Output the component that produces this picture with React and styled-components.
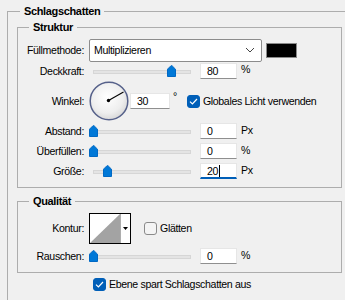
import React from "react";
import styled, { createGlobalStyle } from "styled-components";

const GlobalStyle = createGlobalStyle`
  html, body {
    margin: 0;
    padding: 0;
    background: #f0f0f0;
    overflow: hidden;
  }
  body {
    font-family: "Liberation Sans", Arial, sans-serif;
    font-size: 10.6px;
    letter-spacing: -0.35px;
    color: #000;
  }
  * {
    box-sizing: border-box;
  }
`;

const Outer = styled.fieldset`
  margin: 4px 0 0 7px;
  padding: 1px 0 0 9px;
  border: none;
  border-top: 1px solid #adadad;
  border-left: 1px solid #adadad;
  min-width: 0;
  width: 338px;
  height: 300px;
`;

const Legend = styled.legend`
  margin-left: 3px;
  padding: 0 4px;
  font-weight: bold;
  font-size: 11px;
  line-height: 15px;
`;

const Group = styled.fieldset`
  margin: ${(p) => p.$mt || 0}px 0 0 0;
  padding: ${(p) => p.$pt}px 0 6px 8px;
  border: 1px solid #adadad;
  width: 325px;
  min-width: 0;
  display: flex;
  flex-direction: column;
  gap: ${(p) => p.$gap || 0}px;
`;

const Row = styled.div`
  display: flex;
  align-items: center;
  height: ${(p) => p.$h}px;
`;

const Label = styled.div`
  width: 58px;
  margin-right: 5px;
  text-align: right;
  white-space: nowrap;
`;

const Select = styled.div`
  width: 173px;
  height: 23px;
  background: #fff;
  border: 1px solid #8c8c8c;
  border-radius: 2px;
  display: flex;
  align-items: center;
  justify-content: space-between;
  padding: 0 6px 0 4px;
`;

const Swatch = styled.div`
  width: 31px;
  height: 15px;
  margin-left: 4px;
  background: #000;
  border: 1px solid #8a8a8a;
`;

const SliderBox = styled.div`
  position: relative;
  width: 106px;
  height: 12px;
  margin-right: 5px;
`;

const Track = styled.div`
  margin: 5px 4px 0;
  height: 4px;
  background: #e4e4e4;
  border: 1px solid #d6d6d6;
`;

const Thumb = styled.svg`
  position: absolute;
  top: 0;
  left: ${(p) => p.$pos}px;
`;

const NumBox = styled.div`
  width: ${(p) => p.$w || 37}px;
  height: 16px;
  margin-left: ${(p) => p.$ml || 0}px;
  background: #fff;
  border: 1px solid #e6e6e6;
  border-bottom: ${(p) => (p.$focus ? "2px solid #005fb8" : "1px solid #8f8f8f")};
  padding-left: 6px;
  display: flex;
  align-items: center;
  line-height: 14px;
`;

const Caret = styled.span`
  display: inline-block;
  width: 1px;
  height: 12px;
  background: #000;
  margin-left: 1px;
`;

const Unit = styled.span`
  margin-left: 4px;
  margin-bottom: ${(p) => p.$lift || 3}px;
`;

const Degree = styled.span`
  margin-left: 3px;
  align-self: flex-start;
  margin-top: 9px;
`;

const Box = styled.span`
  width: 13px;
  height: 13px;
  border-radius: 3px;
  flex: none;
  display: inline-flex;
  align-items: center;
  justify-content: center;
  background: ${(p) => (p.$checked ? "#005fb8" : "#f4f4f4")};
  border: 1px solid ${(p) => (p.$checked ? "#005fb8" : "#8a8a8a")};
  margin: 0 3px 0 ${(p) => p.$ml || 0}px;
`;

const Footer = styled.div`
  display: flex;
  align-items: center;
  height: 16px;
  margin-top: 3px;
  padding-left: 76px;
`;

const Check = ({ checked, ml }) => (
  <Box $checked={checked} $ml={ml}>
    {checked && (
      <svg width="9" height="7" viewBox="0 0 9 7">
        <path d="M1 3.6 L3.4 6 L8 1" fill="none" stroke="#fff" strokeWidth="1.2" />
      </svg>
    )}
  </Box>
);

const Slider = ({ pos }) => (
  <SliderBox>
    <Track />
    <Thumb $pos={pos} width="9" height="12" viewBox="0 0 9 12">
      <path d="M0.5 4.2 L3.8 0.9 Q4.5 0.3 5.2 0.9 L8.5 4.2 V11.5 H0.5 Z" fill="#0078d7" stroke="#0068c4" />
    </Thumb>
  </SliderBox>
);

const Dial = () => (
  <svg width="40" height="40" viewBox="0 0 40 40">
    <defs>
      <radialGradient id="dialFill" cx="45%" cy="40%" r="60%">
        <stop offset="0%" stopColor="#ffffff" />
        <stop offset="70%" stopColor="#eeeeee" />
        <stop offset="100%" stopColor="#d9d9d9" />
      </radialGradient>
    </defs>
    <circle cx="20" cy="20" r="18.8" fill="url(#dialFill)" stroke="#56618a" strokeWidth="1.5" />
    <line x1="19.5" y1="19.5" x2="34.5" y2="11" stroke="#000" strokeWidth="1.1" />
    <circle cx="19.5" cy="19.5" r="1.7" fill="#000" />
  </svg>
);

const Contour = () => (
  <svg width="42" height="31" viewBox="0 0 42 31">
    <rect x="0.5" y="0.5" width="41" height="30" fill="#fff" stroke="#000" />
    <path d="M1 30 L31 1 V30 Z" fill="#a3a3a3" />
    <line x1="31.5" y1="1" x2="31.5" y2="30" stroke="#adadad" />
    <path d="M34 14 L39 14 L36.5 17 Z" fill="#000" />
  </svg>
);

const SliderRow = ({ label, pos, value, unit, focus }) => (
  <Row $h={20}>
    <Label>{label}</Label>
    <Slider pos={pos} />
    <NumBox $focus={focus}>
      {value}
      {focus && <Caret />}
    </NumBox>
    <Unit>{unit}</Unit>
  </Row>
);

const App = () => (
  <>
    <GlobalStyle />
    <Outer>
      <Legend>Schlagschatten</Legend>
      <Group $pt={4}>
        <Legend>Struktur</Legend>
        <Row $h={22}>
          <Label>Füllmethode:</Label>
          <Select>
            <span>Multiplizieren</span>
            <svg width="10" height="6" viewBox="0 0 10 6">
              <path d="M1 1 L5 5 L9 1" fill="none" stroke="#444" strokeWidth="1" />
            </svg>
          </Select>
          <Swatch />
        </Row>
        <Row $h={20}>
          <Label>Deckkraft:</Label>
          <Slider pos={78} />
          <NumBox>80</NumBox>
          <Unit $lift={4}>%</Unit>
        </Row>
        <Row $h={40}>
          <Label>Winkel:</Label>
          <Dial />
          <NumBox $w={40} $ml={1}>30</NumBox>
          <Degree>°</Degree>
          <Check checked ml={10} />
          <span>Globales Licht verwenden</span>
        </Row>
        <SliderRow label="Abstand:" pos={0} value="0" unit="Px" />
        <SliderRow label="Überfüllen:" pos={0} value="0" unit="%" />
        <SliderRow label="Größe:" pos={14} value="20" unit="Px" focus />
      </Group>
      <Group $mt={6} $pt={3} $gap={2}>
        <Legend>Qualität</Legend>
        <Row $h={32}>
          <Label>Kontur:</Label>
          <Contour />
          <Check ml={13} />
          <span>Glätten</span>
        </Row>
        <SliderRow label="Rauschen:" pos={0} value="0" unit="%" />
      </Group>
      <Footer>
        <Check checked />
        <span>Ebene spart Schlagschatten aus</span>
      </Footer>
    </Outer>
  </>
);

export default App;
